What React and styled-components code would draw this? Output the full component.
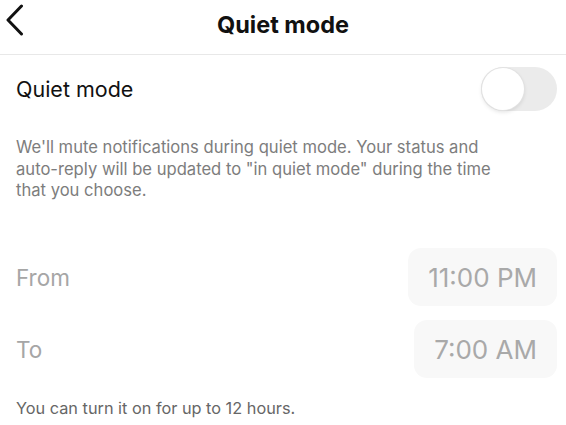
import styled, { createGlobalStyle } from "styled-components";

const GlobalStyle = createGlobalStyle`
    html, body {
        margin: 0;
        padding: 0;
        background: #ffffff;
    }
    body {
        font-family: Inter, "Noto Sans", "Liberation Sans", sans-serif;
        -webkit-font-smoothing: antialiased;
    }
`;

const Page = styled.div`
    width: 566px;
    height: 425px;
    overflow: hidden;
    display: flex;
    flex-direction: column;
    background: #fff;
`;

const Header = styled.header`
    height: 54px;
    border-bottom: 1px solid #e8e8e8;
    display: grid;
    grid-template-columns: 60px 1fr 60px;
    align-items: center;
`;

const BackButton = styled.button`
    border: none;
    background: none;
    padding: 0 0 14px 5px;
    height: 100%;
    display: flex;
    align-items: center;
    cursor: pointer;
`;

const Title = styled.h1`
    margin: 0 0 6px;
    text-align: center;
    font-size: 23.5px;
    font-weight: 700;
    color: #111;
`;

const Content = styled.main`
    padding: 0 9px 0 16px;
    display: flex;
    flex-direction: column;
`;

const ToggleRow = styled.div`
    height: 68px;
    display: flex;
    align-items: center;
    justify-content: space-between;
`;

const RowLabel = styled.span`
    font-size: ${({ $muted }) => ($muted ? "22.5px" : "21.5px")};
    color: ${({ $muted }) => ($muted ? "#a6a6a6" : "#111")};
`;

const Track = styled.button`
    width: 76px;
    height: 44px;
    border-radius: 22px;
    border: none;
    background: #ebebeb;
    padding: 1px;
    display: flex;
    align-items: center;
    cursor: pointer;
`;

const Knob = styled.span`
    width: 42px;
    height: 42px;
    border-radius: 50%;
    background: #fff;
    box-shadow: 0 0 0 1px #e2e2e2, 0 2px 4px rgba(0, 0, 0, 0.12);
`;

const Description = styled.p`
    margin: 14px 0 0;
    max-width: 485px;
    font-size: 16.6px;
    line-height: 21.7px;
    color: #7d7d7d;
`;

const TimeList = styled.div`
    margin-top: 46px;
    display: flex;
    flex-direction: column;
    gap: 14px;
`;

const TimeRow = styled.div`
    display: flex;
    align-items: center;
    justify-content: space-between;
`;

const TimeBox = styled.button`
    height: 58px;
    padding: 0 20px;
    border: none;
    border-radius: 13px;
    background: #f8f8f8;
    font-family: inherit;
    font-size: 26px;
    color: #a9a9a9;
    cursor: pointer;
`;

const Note = styled.p`
    margin: 20px 0 0;
    font-size: 16.3px;
    color: #666;
`;

const ChevronLeft = () => (
	<svg width="20" height="32" viewBox="0 0 20 32" fill="none">
		<path
			d="M16.5 2 L3 16 L16.5 30"
			stroke="#111"
			strokeWidth="3"
			strokeLinecap="round"
			strokeLinejoin="round"
		/>
	</svg>
);

const times = [
	{ label: "From", value: "11:00 PM" },
	{ label: "To", value: "7:00 AM" },
];

const App = () => {
	return (
		<Page>
			<GlobalStyle />
			<Header>
				<BackButton aria-label="Back">
					<ChevronLeft />
				</BackButton>
				<Title>Quiet mode</Title>
				<span />
			</Header>
			<Content>
				<ToggleRow>
					<RowLabel>Quiet mode</RowLabel>
					<Track aria-label="Toggle quiet mode">
						<Knob />
					</Track>
				</ToggleRow>
				<Description>
					We'll mute notifications during quiet mode. Your status and
					auto-reply will be updated to "in quiet mode" during the time
					that you choose.
				</Description>
				<TimeList>
					{times.map(({ label, value }) => (
						<TimeRow key={label}>
							<RowLabel $muted>{label}</RowLabel>
							<TimeBox>{value}</TimeBox>
						</TimeRow>
					))}
				</TimeList>
				<Note>You can turn it on for up to 12 hours.</Note>
			</Content>
		</Page>
	);
};

export default App;
